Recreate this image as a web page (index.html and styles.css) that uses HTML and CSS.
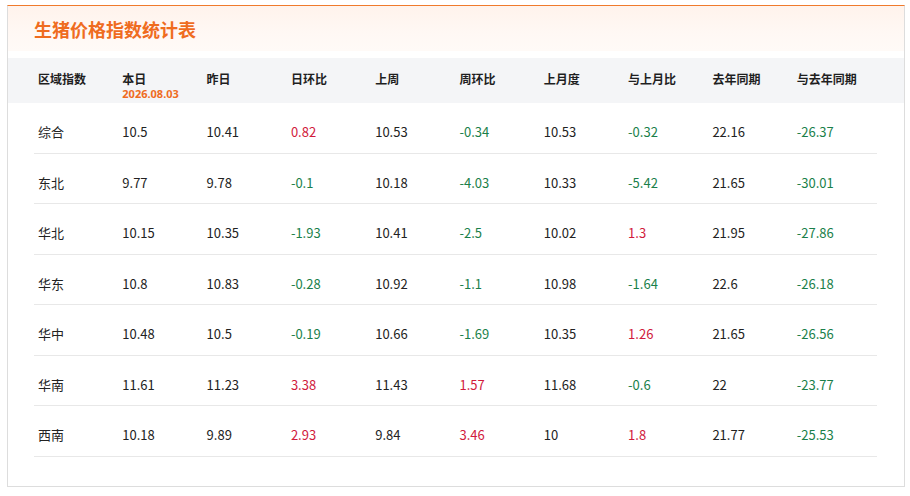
FILE: index.html
```html
<!DOCTYPE html>
<html lang="zh">
<head>
<meta charset="utf-8">
<link rel="stylesheet" href="styles.css">
</head>
<body>
<div class="card">
  <div class="card-head"><h1 class="title">生猪价格指数统计表</h1></div>
  <div class="thead">
    <div class="grid">
      <div class="th">区域指数</div>
      <div class="th">本日<span class="date">2026.08.03</span></div>
      <div class="th">昨日</div>
      <div class="th">日环比</div>
      <div class="th">上周</div>
      <div class="th">周环比</div>
      <div class="th">上月度</div>
      <div class="th">与上月比</div>
      <div class="th">去年同期</div>
      <div class="th">与去年同期</div>
    </div>
  </div>
  <div class="tbody">
    <div class="grid row">
      <div class="td">综合</div><div class="td">10.5</div><div class="td">10.41</div><div class="td up">0.82</div><div class="td">10.53</div><div class="td down">-0.34</div><div class="td">10.53</div><div class="td down">-0.32</div><div class="td">22.16</div><div class="td down">-26.37</div>
    </div>
    <div class="grid row">
      <div class="td">东北</div><div class="td">9.77</div><div class="td">9.78</div><div class="td down">-0.1</div><div class="td">10.18</div><div class="td down">-4.03</div><div class="td">10.33</div><div class="td down">-5.42</div><div class="td">21.65</div><div class="td down">-30.01</div>
    </div>
    <div class="grid row">
      <div class="td">华北</div><div class="td">10.15</div><div class="td">10.35</div><div class="td down">-1.93</div><div class="td">10.41</div><div class="td down">-2.5</div><div class="td">10.02</div><div class="td up">1.3</div><div class="td">21.95</div><div class="td down">-27.86</div>
    </div>
    <div class="grid row">
      <div class="td">华东</div><div class="td">10.8</div><div class="td">10.83</div><div class="td down">-0.28</div><div class="td">10.92</div><div class="td down">-1.1</div><div class="td">10.98</div><div class="td down">-1.64</div><div class="td">22.6</div><div class="td down">-26.18</div>
    </div>
    <div class="grid row">
      <div class="td">华中</div><div class="td">10.48</div><div class="td">10.5</div><div class="td down">-0.19</div><div class="td">10.66</div><div class="td down">-1.69</div><div class="td">10.35</div><div class="td up">1.26</div><div class="td">21.65</div><div class="td down">-26.56</div>
    </div>
    <div class="grid row">
      <div class="td">华南</div><div class="td">11.61</div><div class="td">11.23</div><div class="td up">3.38</div><div class="td">11.43</div><div class="td up">1.57</div><div class="td">11.68</div><div class="td down">-0.6</div><div class="td">22</div><div class="td down">-23.77</div>
    </div>
    <div class="grid row">
      <div class="td">西南</div><div class="td">10.18</div><div class="td">9.89</div><div class="td up">2.93</div><div class="td">9.84</div><div class="td up">3.46</div><div class="td">10</div><div class="td up">1.8</div><div class="td">21.77</div><div class="td down">-25.53</div>
    </div>
  </div>
</div>
</body>
</html>
```

FILE: styles.css
```css
html, body {
  margin: 0;
  padding: 0;
  background: #ffffff;
}
body {
  font-family: "Noto Sans CJK SC", sans-serif;
  font-size: 13px;
  color: #222222;
}
.card {
  box-sizing: border-box;
  margin: 5px 0 0 7px;
  width: 898px;
  height: 482px;
  border: 1px solid #dddddd;
  border-top: 1px solid #f07a2c;
  background: #ffffff;
}
.card-head {
  height: 45px;
  background: linear-gradient(180deg, #fff3ec 0%, #fff8f4 60%, #fffaf7 100%);
  display: flex;
  align-items: center;
  padding-left: 26px;
  margin-bottom: 7px;
}
.title {
  margin: 0;
  font-family: "Noto Sans CJK SC", sans-serif;
  font-size: 18px;
  font-weight: 700;
  color: #ef6c1f;
  line-height: 24px;
}
.thead {
  background: #f4f5f7;
  height: 45px;
  box-sizing: border-box;
  padding: 12px 27px 0 26px;
}
.grid {
  display: grid;
  grid-template-columns: repeat(10, 1fr);
}
.th {
  padding-left: 4px;
  font-family: "Noto Sans CJK SC", sans-serif;
  font-weight: 700;
  font-size: 12px;
  line-height: 18px;
  color: #1f1f1f;
  display: flex;
  flex-direction: column;
}
.date {
  font-family: "Noto Sans", sans-serif;
  font-size: 11px;
  line-height: 12px;
  color: #ef6c1f;
  font-weight: 700;
}
.tbody {
  padding: 0 27px 0 26px;
}
.row {
  box-sizing: border-box;
  height: 50.5px;
  padding-top: 20px;
  border-bottom: 1px solid #e8e8e8;
}
.td {
  padding-left: 4px;
  line-height: 18px;
  color: #222222;
}
.td.up {
  color: #d11a3c;
}
.td.down {
  color: #1a7f4a;
}
```
